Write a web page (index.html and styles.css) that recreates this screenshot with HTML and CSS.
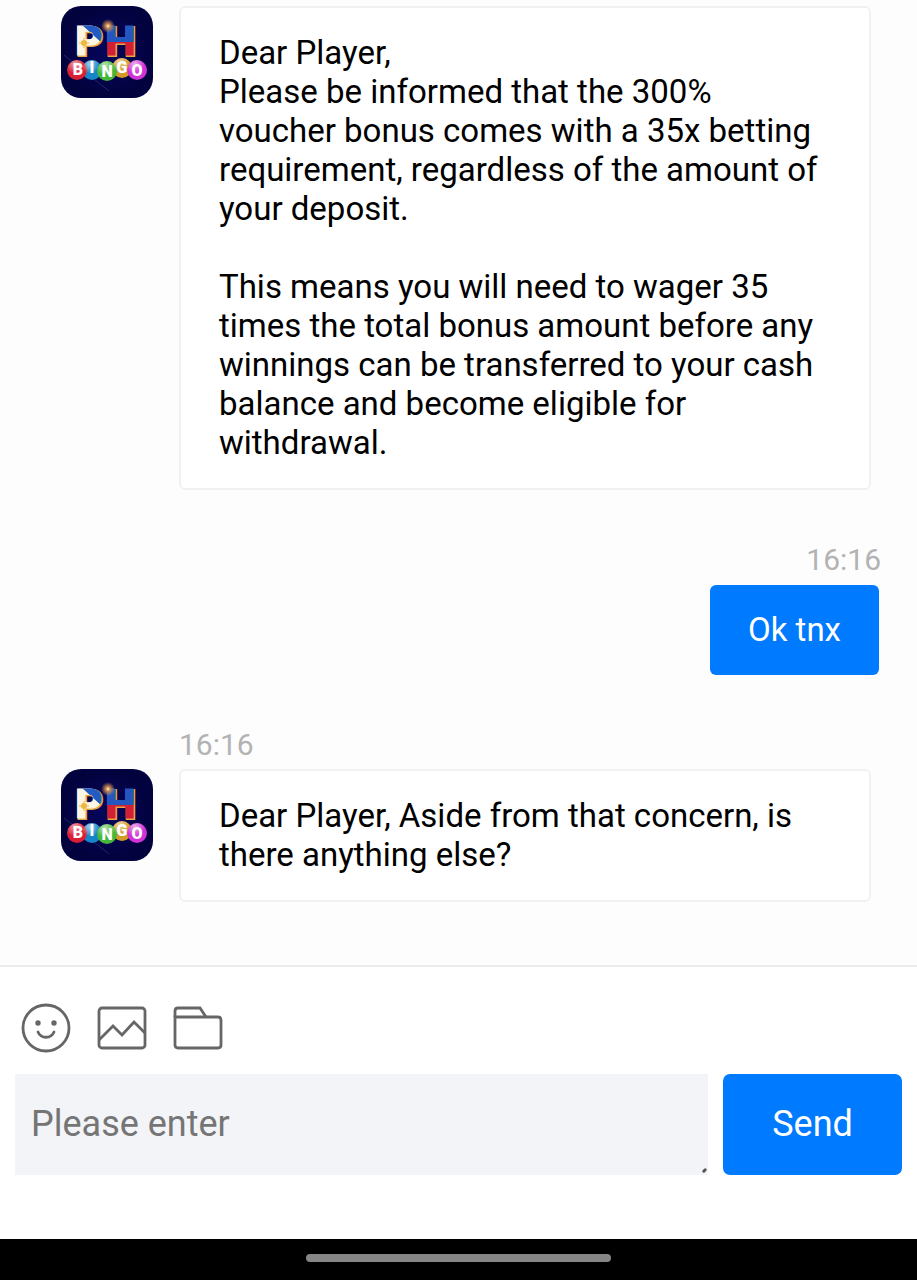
FILE: index.html
```html
<!DOCTYPE html>
<html lang="en">
<head>
    <meta charset="UTF-8">
    <meta name="viewport" content="width=device-width, initial-scale=1.0">
    <title>Chat</title>
    <link rel="stylesheet" href="styles.css">
</head>
<body>
    <!-- shared logo -->
    <svg class="defs" aria-hidden="true">
        <defs>
            <linearGradient id="flagH" x1="0" y1="14" x2="0" y2="54" gradientUnits="userSpaceOnUse">
                <stop offset="0.55" stop-color="#2456c0"/>
                <stop offset="0.55" stop-color="#d21f35"/>
            </linearGradient>
            <radialGradient id="night">
                <stop offset="0" stop-color="#06065c"/>
                <stop offset="1" stop-color="#02023e"/>
            </radialGradient>
            <radialGradient id="spark">
                <stop offset="0" stop-color="#fff6d0"/>
                <stop offset="0.3" stop-color="#c98a50"/>
                <stop offset="1" stop-color="#c98a50" stop-opacity="0"/>
            </radialGradient>
            <radialGradient id="shine" cx="0.4" cy="0.2" r="0.8">
                <stop offset="0" stop-color="#ffffff" stop-opacity="0.6"/>
                <stop offset="0.6" stop-color="#ffffff" stop-opacity="0"/>
            </radialGradient>
            <clipPath id="pTop"><path d="M20 18h26v20h-4z"/></clipPath>
            <symbol id="logo" viewBox="0 0 92 92">
                <rect width="92" height="92" rx="20" fill="url(#night)"/>
                <path d="M3 49l45 36" stroke="#242665" stroke-width="1"/>
                <g class="logo-ph">
                    <text x="14" y="50" fill="#d9882b" stroke="#e8a943" stroke-width="2">P</text>
                    <text x="44" y="50" fill="#d9882b" stroke="#e8a943" stroke-width="2">H</text>
                    <text x="13" y="49" fill="#fdf6e4" stroke="#fdf6e4" stroke-width="1">P</text>
                    <text x="13" y="49" fill="#245bc3" stroke="#245bc3" stroke-width="1" clip-path="url(#pTop)">P</text>
                    <text x="43" y="49" fill="url(#flagH)" stroke="url(#flagH)" stroke-width="1">H</text>
                </g>
                <circle cx="23" cy="37" r="3" fill="#efb83e"/>
                <path d="M23 32v10M18 37h10" stroke="#efb83e" stroke-width="1"/>
                <circle cx="47" cy="20" r="7" fill="url(#spark)"/>
                <g>
                    <circle cx="31" cy="64" r="10" fill="#1686c8"/>
                    <circle cx="61" cy="62" r="10" fill="#d49a28"/>
                    <circle cx="16" cy="64" r="10" fill="#d91e35"/>
                    <circle cx="46" cy="65" r="10" fill="#45b83a"/>
                    <circle cx="76" cy="64" r="10" fill="#cf32d5"/>
                    <circle cx="31" cy="64" r="10" fill="url(#shine)"/>
                    <circle cx="61" cy="62" r="10" fill="url(#shine)"/>
                    <circle cx="16" cy="64" r="10" fill="url(#shine)"/>
                    <circle cx="46" cy="65" r="10" fill="url(#shine)"/>
                    <circle cx="76" cy="64" r="10" fill="url(#shine)"/>
                </g>
                <g class="logo-bingo">
                    <text x="17" y="69">B</text>
                    <text x="31" y="67">I</text>
                    <text x="46" y="71">N</text>
                    <text x="61" y="67">G</text>
                    <text x="76" y="70">O</text>
                </g>
            </symbol>
        </defs>
    </svg>

    <main class="chat">
        <div class="message">
            <svg class="avatar" role="img" aria-label="PH Bingo"><use href="#logo"/></svg>
            <div class="bubble">
                <p>Dear Player,<br>Please be informed that the 300% voucher bonus comes with a 35x betting requirement, regardless of the amount of your deposit.</p>
                <p>This means you will need to wager 35 times the total bonus amount before any winnings can be transferred to your cash balance and become eligible for withdrawal.</p>
            </div>
        </div>

        <div class="message mine">
            <time class="time">16:16</time>
            <div class="bubble">Ok tnx</div>
        </div>

        <div class="message">
            <time class="time">16:16</time>
            <svg class="avatar" role="img" aria-label="PH Bingo"><use href="#logo"/></svg>
            <div class="bubble">Dear Player, Aside from that concern, is there anything else?</div>
        </div>
    </main>

    <form class="composer">
        <div class="tools">
            <button type="button" class="tool" aria-label="Emoji">
                <svg viewBox="0 0 50 50">
                    <circle cx="25" cy="25" r="23"/>
                    <circle class="dot" cx="17" cy="20" r="2.700"/>
                    <circle class="dot" cx="33" cy="20" r="2.700"/>
                    <path d="M17 29c3 7 13 7 16 0" stroke-linecap="round"/>
                </svg>
            </button>
            <button type="button" class="tool" aria-label="Image">
                <svg viewBox="0 0 50 50">
                    <rect x="2" y="5" width="46" height="40" rx="3"/>
                    <path d="M2 37l14-14 9 9 12-13 11 11"/>
                </svg>
            </button>
            <button type="button" class="tool" aria-label="File">
                <svg viewBox="0 0 50 50">
                    <path d="M2 14V8q0-3 3-3h22l6 9"/>
                    <path d="M2 14h43q3 0 3 3v25q0 3-3 3H5q-3 0-3-3z"/>
                </svg>
            </button>
        </div>
        <div class="entry">
            <div class="field">
                <textarea rows="1" placeholder="Please enter" aria-label="Message"></textarea>
            </div>
            <button type="submit" class="send">Send</button>
        </div>
    </form>

    <div class="navbar"><div class="handle"></div></div>
</body>
</html>
```
FILE: styles.css
```css
* {
    box-sizing: border-box;
}

body {
    margin: 0;
    min-height: 100vh;
    display: flex;
    flex-direction: column;
    font-family: Roboto, sans-serif;
    font-size: 33px;
    line-height: 39px;
    color: #000;
    background: #fdfdfd;
}

.defs {
    position: absolute;
    width: 0;
    height: 0;
}

.chat {
    flex: 1;
    display: flex;
    flex-direction: column;
    gap: 50px;
    padding: 6px 46px 60px 61px;
}

.message {
    display: grid;
    grid-template-columns: 92px 1fr;
    column-gap: 26px;
    row-gap: 5px;
    align-items: start;
}

.message .time {
    grid-column: 2;
}

.avatar {
    width: 92px;
    height: 92px;
}

.bubble {
    padding: 25px 38px 26px;
    background: #fff;
    border: 2px solid #f1f1f2;
    border-radius: 6px;
}

.bubble p {
    margin: 0 0 39px;
}

.bubble p:last-child {
    margin-bottom: 0;
}

.time {
    font-size: 30px;
    color: #b3b3b3;
}

.mine {
    display: flex;
    flex-direction: column;
    align-items: flex-end;
    row-gap: 6px;
    margin-right: -10px;
}

.mine .bubble {
    border: none;
    margin-right: 2px;
    color: #fff;
    background: #007aff;
}

.composer {
    padding: 36px 15px 64px;
    background: #fff;
    border-top: 2px solid #ececec;
}

.tools {
    display: flex;
    gap: 26px;
    padding: 0 6px;
    margin-bottom: 21px;
}

.tool {
    width: 50px;
    height: 50px;
    padding: 0;
    border: none;
    background: none;
    cursor: pointer;
}

.tool svg {
    display: block;
    fill: none;
    stroke: #666;
    stroke-width: 2.8;
}

.tool .dot {
    fill: #666;
    stroke: none;
}

.entry {
    display: flex;
    gap: 15px;
}

.field {
    position: relative;
    flex: 1;
    display: flex;
}

/* resize mark */
.field::after {
    content: "";
    position: absolute;
    right: 1px;
    bottom: 3px;
    width: 5px;
    height: 3px;
    border-radius: 2px;
    background: #555;
    transform: rotate(-45deg);
}

textarea {
    width: 100%;
    height: 101px;
    padding: 29px 16px;
    border: none;
    outline: none;
    resize: none;
    font: 36px/42px Roboto, sans-serif;
    background: #f3f4f8;
}

textarea::placeholder {
    color: #757575;
}

.send {
    width: 179px;
    padding: 0 0 2px;
    border: none;
    border-radius: 7px;
    font: 36px/42px Roboto, sans-serif;
    color: #fff;
    background: #007aff;
    cursor: pointer;
}

.navbar {
    padding: 15px 0 18px;
    background: #000;
}

.handle {
    width: 33.3%;
    height: 8px;
    margin: 0 auto;
    border-radius: 4px;
    background: #868686;
}

.logo-ph {
    font: bold 39px "DejaVu Sans", sans-serif;
}

.logo-bingo {
    font: 900 16px Roboto, sans-serif;
    fill: #fff;
    text-anchor: middle;
}
```
